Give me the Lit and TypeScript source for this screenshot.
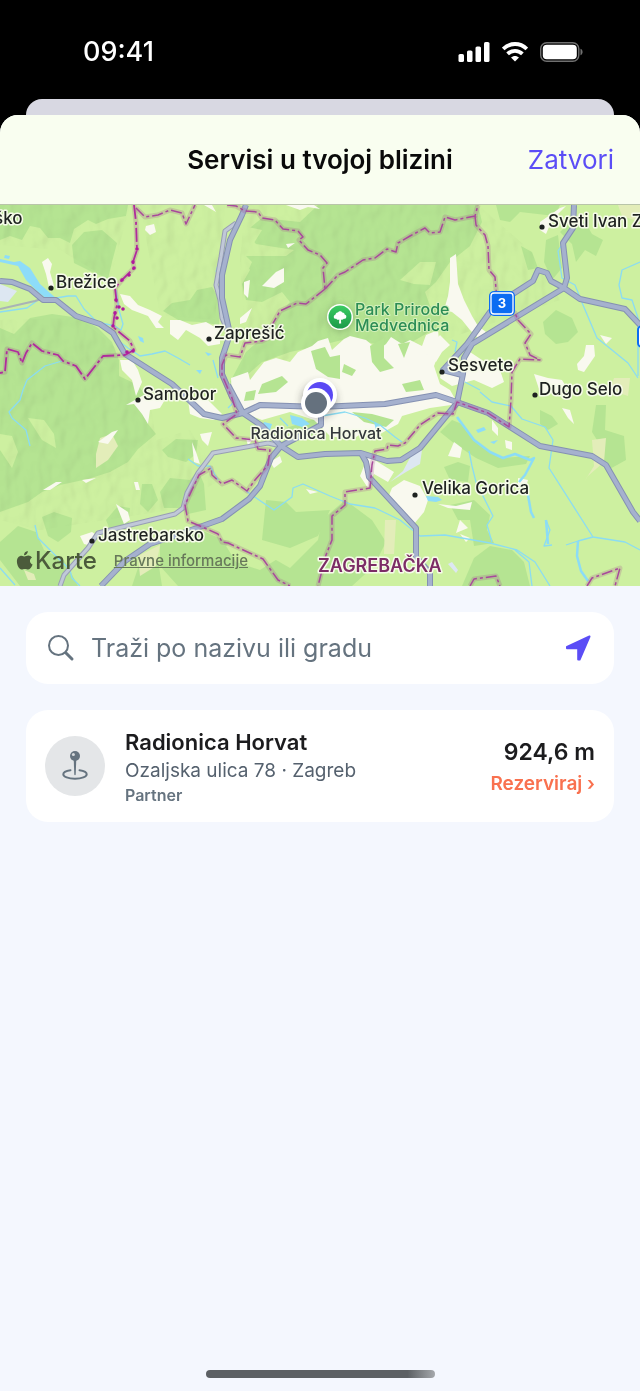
import { LitElement, html, svg, css } from 'lit';
import { customElement, property } from 'lit/decorators.js';

interface Place {
    name: string;
    x: number;
    y: number;
    dot?: [number, number];
}

// Map shapes share one coordinate space: 640 wide, y from 205 to 586.
const forests = [
    'M0 205H128L126 216L108 219L96 224L88 220L74 229L70 243L60 238L48 238L40 228L30 226L22 240L10 236L0 240Z',
    'M72 245L84 232L102 230L117 243L112 262L108 279L92 272L74 263Z',
    'M0 328L14 334L30 318L52 314L80 318L98 328L112 342L119 360L119 376L138 385L150 402L148 424L156 434L138 449L128 462L110 472L88 479L60 485L42 492L28 502L0 512Z',
    'M163 311L172 303L190 300L197 290L212 287L220 300L219 325L200 322L180 321Z',
    'M245 232L262 218L300 222L318 205H478L482 222L470 246L450 262L436 282L425 292L430 306L444 310L436 328L412 342L384 346L350 338L318 346L290 352L262 362L246 376L236 388L230 382L246 352L262 338L276 318L290 302L282 292L262 302L246 300L242 284L250 270L242 256L286 256L294 250L256 244Z',
    'M560 232L572 220L585 222L592 234L603 240L596 256L585 250L576 262L572 244Z',
    'M496 205H560L555 216L520 212L510 222L500 220Z',
    'M546 240L558 235L562 268L552 280L544 262Z',
    'M521 246L532 252L538 268L528 270Z',
    'M543 322L556 310L572 318L578 332L568 342L556 344L545 334Z',
    'M596 405L606 405L605 430L624 436L626 460L608 470L596 456L602 448L592 432Z',
    'M540 410L552 416L558 424L548 430L540 424Z',
    'M440 432L452 420L462 424L478 444L500 458L530 456L526 464L498 468L476 458L455 444Z',
    'M444 467L458 462L470 466L468 482L450 480Z',
    'M450 505L474 500L490 515L487 530L494 543L474 546L470 520L458 520Z',
    'M474 558L490 546L512 550L524 562L530 586H462Z',
    'M162 450L176 439L198 440L196 454L186 462L168 457Z',
    'M160 492L170 478L190 480L198 470L204 484L206 510L188 514L180 508L164 508Z',
    'M142 484L152 484L158 500L148 512L140 504Z',
    'M42 517L54 512L72 518L71 532L58 542L48 536Z',
    'M0 542L18 526L36 532L44 550L64 560L78 586H20L0 560Z',
    'M106 520L118 506L130 508L128 528L110 530Z',
    'M160 540L196 528L224 540L262 552L290 568L318 540L322 520L345 500L372 520L386 542L374 566L352 586H178L160 566Z',
    'M286 428L318 418L322 430L300 436Z',
    'M266 500L286 502L296 512L330 510L318 536L290 548L262 540Z',
    'M140 562L158 560L162 586H132Z'
];

const lightPatches = [
    'M140 250L200 236L214 250L206 282L184 290L160 278L142 282Z',
    'M28 418L44 420L54 434L56 448L42 440Z',
    'M0 434L12 436L18 452L12 468L0 450Z',
    'M400 280L420 262L436 262L430 285L414 284Z',
    'M208 238L240 225L262 230L246 256L252 262L244 280L230 290Z',
    'M226 546L240 538L262 548L282 556L260 570L236 562Z'
];

const beige = [
    'M100 438L112 434L118 446L108 460L96 468L96 454Z',
    'M385 520L396 520L394 554L384 554Z',
    'M592 440L606 438L604 462L588 476L584 482L594 466Z',
    'M138 556L160 545L156 566L140 576Z',
    'M618 205H640V222L622 216Z',
    'M614 378L630 378L628 396L610 390Z',
    'M420 378L434 382L430 394L422 392Z',
    'M24 570L34 574L36 580L28 580Z'
];

const towns = [
    'M232 402L231 378L248 372L250 380L264 362L276 358L290 362L298 352L312 346L318 341L328 338L332 350L344 339L350 336L366 340L378 350L386 344L391 337L402 344L410 340L422 346L426 335L438 330L440 350L434 366L440 384L450 390L458 404L430 408L402 416L398 424L380 434L366 430L352 440L330 436L314 420L290 412L262 420L246 414Z',
    'M470 352L482 360L500 370L504 382L492 388L474 380L452 386L440 378L442 366L456 366Z',
    'M170 320L180 320L192 325L206 322L220 330L220 344L208 346L200 338L186 330L178 340L170 334Z',
    'M120 294L130 296L138 305L150 310L162 316L158 322L164 328L156 328L148 316L132 310L124 304Z',
    'M120 360L132 360L138 370L142 382L136 396L132 380L122 370Z',
    'M126 405L142 396L166 398L160 408L150 410L148 424L142 414L134 404Z',
    'M188 400L204 396L216 408L222 414L214 420L200 418L190 414Z',
    'M42 262L48 258L52 264L50 272L54 286L50 292L46 274Z',
    'M146 226L154 224L156 232L150 235L145 230Z',
    'M450 258L456 254L458 284L464 300L472 316L478 326L486 332L478 338L470 330L462 320L452 312L444 310L448 296L450 282Z',
    'M204 205L216 212L212 205ZM286 205H314L320 209L308 207L300 210Z',
    'M276 272L284 268L284 282L274 288L262 286L270 278Z',
    'M244 282L250 280L248 298L244 294Z',
    'M240 318L252 308L246 322L240 324ZM286 244L295 243L288 248Z',
    'M424 352L440 335L450 345L442 352L436 362Z',
    'M540 222L560 208L566 206L552 220L546 234L540 230Z',
    'M586 345L594 345L595 356L584 372L578 370L577 364L584 356Z',
    'M534 374L548 378L562 380L568 390L556 394L540 392Z',
    'M392 488L404 480L420 486L428 500L424 512L414 524L398 508L388 498Z',
    'M438 504L456 506L472 502L470 510L448 508Z',
    'M505 440L512 442L512 450L506 448ZM460 520L468 528L456 533Z',
    'M518 478L528 480L524 494L518 486Z',
    'M116 504L128 512L130 520L124 524Z',
    'M80 536L92 532L98 536L92 546L84 544Z',
    'M134 482L138 482L140 490L136 490Z',
    'M43 490L56 482L62 482L50 490ZM82 480L96 478L86 483Z',
    'M98 442L112 432L118 430L108 444Z',
    'M200 434L212 432L208 446L202 440ZM192 442L196 452L200 464L194 462Z',
    'M270 462L280 456L282 462L274 468Z',
    'M246 438L252 440L248 446ZM306 489L318 492L310 494Z',
    'M368 456L394 472L388 482L374 474L368 488L360 476Z',
    'M492 420L498 428L498 436L492 430ZM562 408L570 410L574 424L568 418Z',
    'M454 442L462 448L460 458L448 456Z',
    'M600 335L612 338L606 344ZM460 534L470 538L466 542Z'
];

const lawns = [
    'M311 351L325 347L330 357L340 355L340 379L328 377L316 369Z',
    'M370 346L384 338L384 358L394 368L380 372L372 362Z',
    'M398 344L410 342L404 358Z',
    'M344 364L356 370L352 376L342 372Z',
    'M402 384L420 380L424 390L406 392Z',
    'M262 384L282 376L288 382L276 392L258 394Z',
    'M246 392L256 390L254 400L244 401Z',
    'M352 412L372 414L394 420L386 427L364 422Z',
    'M300 420L316 424L326 438L310 436L296 428Z'
];

const lakes = [
    'M0 259L14 262L20 261L30 268L40 284L50 293L56 298L48 300L38 292L26 280L18 266L0 262Z',
    'M5 255L10 256L9 259L4 258Z',
    'M290 415L302 418L310 424L302 427L292 424Z',
    'M264 422L272 424L270 430L262 427Z',
    'M374 422L380 426L376 430Z',
    'M476 430L484 427L486 430L478 433ZM490 442L498 440L494 444Z',
    'M426 496L438 497L442 500L436 502L428 501Z',
    'M138 336L143 338L144 343L140 341Z',
    'M205 352L212 354L208 356ZM196 370L202 370L200 374Z'
];

const airfields = ['M0 284L17 291L8 302L0 301Z', 'M390 482L403 471L412 454L422 450L420 464L406 472Z', 'M448 564L452 562L458 570L456 573Z'];

const streams = [
    'M56 298L68 296L76 296L84 309L97 322L115 326L121 330L123 324L119 310L116 290',
    'M0 312L27 308L38 300L52 297',
    'M112 336L128 348L140 356L152 354L165 351L178 358L190 365',
    'M23 390L20 400L9 412L12 418L26 430L30 446',
    'M23 390L27 380L45 366L62 361',
    'M35 525L38 538L56 556L70 570L72 578L80 586',
    'M0 568L15 585',
    'M246 491L262 502L274 510L292 497L293 488L303 484L330 496L350 504L375 508L400 520L420 536L445 535L490 543L517 550L535 562L550 586',
    'M188 459L198 466L210 466L218 480',
    'M322 416L345 412L365 418L380 425L395 437L402 442',
    'M280 418L288 426M234 402L228 408',
    'M515 550L529 562L532 586',
    'M469 451L472 466L476 482L493 516L487 525L492 542',
    'M480 392L492 402L511 406L522 419L545 427L553 440L549 468L593 537L625 542L640 550',
    'M593 537L578 541L566 545',
    'M552 545L544 546L550 530L546 520',
    'M563 243L558 251L562 278L575 285L583 305L597 338L612 350L628 363L638 378',
    'M640 262L622 270L619 285L622 298L632 300L638 318V376',
    'M452 340L457 342L455 352M465 382L480 390',
    'M216 272L220 258M213 360L218 378'
];

const rivers = [
    'M457 417L474 440L490 452L503 458L515 454L530 460L534 458L525 475L519 482',
    'M528 495L531 512L534 518',
    'M578 541L577 556L581 571L588 581',
    'M546 520L548 544'
];

const minorRoads = [
    'M236 223L225 231L221 257L216 285L220 300L222 318L228 332',
    'M281 446L268 443L213 453L198 473L187 493L183 508L175 514L98 533L88 548L64 575L60 586'
];

const tracks = ['M0 309L35 301L44 298'];

const motorways = [
    'M0 281L12 282L30 289L43 300L56 300L76 316L100 324L113 333L118 342L125 354L172 384L204 414L222 418L243 413L260 405L320 407L385 404L436 395L457 402L488 413L540 446L592 456L606 465L633 512L640 521',
    'M246 205L242 215L230 240L222 275L222 298L230 334L222 358V374L232 397L243 413L262 426L281 446L298 457L325 454L361 453L387 461L401 460L420 448L457 403',
    'M228 385L243 413',
    'M321 408V425L281 446L271 458L260 486L249 499L222 519L180 534L150 544L125 561L101 586',
    'M361 453L366 462L369 477L416 528V557L430 573V586',
    'M574 205L573 228L563 243L567 278L564 288L580 299L625 309L640 325',
    'M564 288L472 344L464 358L463 374L457 403',
    'M564 288L551 281L547 273L538 270L533 281L505 299L490 312L467 344L443 370L462 375'
];

const borders = [
    'M134 205L136 222L137 250L133 262L134 268L122 280L115 288L117 305L114 318L113 327L130 341L134 350L125 355L103 356L85 379L76 366L63 361L58 355L42 351L32 343L26 353L22 363L18 352L7 349L5 372L0 373'
];

// Small exclaves strung along the state border.
const borderSpots: [number, number][] = [
    [137, 249], [133, 262], [134, 268], [129, 275], [122, 280], [116, 300], [119, 307], [123, 309], [115, 313], [117, 318], [113, 326], [127, 352], [133, 351]
];

const countyBorders = [
    'M136 208L145 217L158 215L170 210L182 213L186 224L195 205',
    'M227 205L236 206L245 211L258 212L262 218L275 220L283 229L298 231L303 237L299 240L308 250L320 255L327 263L323 268L325 289',
    'M325 289L306 304L297 303L280 311L272 325L270 337L262 341L245 343L240 357L226 355L222 365V375L232 398L237 414L223 424L236 438L255 440L258 449L270 450L268 465L255 480L247 491L232 480L222 484L212 475L211 468L199 475L185 505L188 521L200 526L218 534L222 542L228 543L252 554L263 559L278 580L290 586',
    'M325 289L338 275L345 272L363 260L375 258L387 249L396 252L398 243L410 236L425 228L430 233L440 232L445 217L455 220L475 216L478 205',
    'M475 216L476 225L485 235L488 246L489 270L495 277L497 300L515 313L518 320L531 334L525 343L530 355L540 360L520 359L512 372L511 400L509 427L488 413L457 402L453 414L438 413L420 425L405 443L398 446L388 445L387 449L375 451L372 465L370 488L345 492L345 505L332 516V540L326 555L318 586',
    'M470 586L474 579L496 576L500 586',
    'M587 586L592 578L620 568L615 586'
];

const places: Place[] = [
    { name: 'ško', x: -6, y: 224 },
    { name: 'Brežice', x: 56, y: 288, dot: [51, 288] },
    { name: 'Zaprešić', x: 214, y: 339, dot: [209, 339] },
    { name: 'Samobor', x: 143, y: 400, dot: [138, 400] },
    { name: 'Sesvete', x: 448, y: 371, dot: [442, 372] },
    { name: 'Dugo Selo', x: 539, y: 395, dot: [535, 395] },
    { name: 'Sveti Ivan Z', x: 548, y: 227, dot: [542, 227] },
    { name: 'Velika Gorica', x: 422, y: 494, dot: [415, 495] },
    { name: 'Jastrebarsko', x: 98, y: 541, dot: [92, 541] }
];

@customElement('nearby-map')
export class NearbyMap extends LitElement {
    @property() workshop = '';

    static styles = css`
    :host {
      display: block;
      position: relative;
      font-family: Inter, "Liberation Sans", sans-serif;
    }
    .map { display: block; width: 100%; height: auto; background: #cdf0a0; }
    .forest { fill: #b5e492; }
    .light { fill: #cdf0a0; }
    .beige { fill: #e3edb9; }
    .town { fill: #f9f9ef; }
    .lake { fill: #8ddcf9; }
    .airfield { fill: #dde7f2; }
    .line { fill: none; stroke-linejoin: round; }
    .stream { stroke: #8bdcf2; stroke-width: 1.3; }
    .river { stroke: #8bdcf6; stroke-width: 2.5; }
    .track { stroke: #a9b3b6; stroke-width: 2; }
    .minor-case { stroke: #989eb4; stroke-width: 5; }
    .minor { stroke: #c0c8d8; stroke-width: 3; }
    .road-case { stroke: #8591b2; stroke-width: 6; }
    .road { stroke: #a5b1ce; stroke-width: 4; }
    .glow { stroke: #a3568e; stroke-opacity: 0.24; stroke-width: 5; }
    .border { stroke: #b02c9c; stroke-width: 1.8; stroke-dasharray: 14 3 3 3; }
    .county { stroke: #a8499b; stroke-width: 1.5; stroke-dasharray: 11 3 3 3; }
    .spot { fill: #b0189c; }
    .label {
      font-size: 17px;
      font-weight: 500;
      fill: #1e2220;
      stroke: #f6fbe9;
      stroke-width: 3;
      stroke-linejoin: round;
      paint-order: stroke;
    }
    .workshop { font-size: 16px; fill: #33373b; text-anchor: middle; }
    .park { font-size: 16px; font-weight: 500; fill: #2c8d55; stroke: #d4f0bb; stroke-width: 2; }
    .region { font-size: 18px; font-weight: 600; fill: #7c2c66; }
    .shield { font-size: 13px; font-weight: 700; fill: #fff; text-anchor: middle; }
    .legal {
      position: absolute;
      left: 16px;
      bottom: 11px;
      display: flex;
      align-items: center;
      gap: 17px;
      color: #4b5b3b;
    }
    .brand { display: flex; align-items: center; gap: 2px; font-size: 24px; line-height: 28px; font-weight: 500; }
    .legal a { color: #67785a; font-size: 15px; line-height: 20px; font-weight: 500; }
  `;

    lines(items: string[], name: string) {
        return items.map(d => svg`<path class="line ${name}" d=${d} />`);
    }

    areas(items: string[], name: string) {
        return items.map(d => svg`<path class=${name} d=${d} />`);
    }

    renderPlace(place: Place) {
        return svg`
      ${place.dot ? svg`<circle cx=${place.dot[0]} cy=${place.dot[1]} r="2.6" fill="#1e2220" />` : ''}
      <text class="label" x=${place.x} y=${place.y}>${place.name}</text>
    `;
    }

    render() {
        return html`
      <svg class="map" viewBox="0 205 640 381" role="img" aria-label="Karta">
        <defs>
          <filter id="relief" x="0" y="0" width="100%" height="100%">
            <feTurbulence type="fractalNoise" baseFrequency="0.07 0.045" numOctaves="2" seed="8" result="noise" />
            <feDiffuseLighting in="noise" surfaceScale="5" lighting-color="#fff" result="light">
              <feDistantLight azimuth="215" elevation="62" />
            </feDiffuseLighting>
            <feComposite in="light" in2="SourceGraphic" operator="in" />
          </filter>
          <filter id="soft" x="-50%" y="-50%" width="200%" height="200%">
            <feGaussianBlur stdDeviation="4" />
          </filter>
          <linearGradient id="park" x1="0" y1="0" x2="0" y2="1">
            <stop offset="0" stop-color="#3ccb62" />
            <stop offset="1" stop-color="#1a9a49" />
          </linearGradient>
        </defs>
        ${this.areas(forests, 'forest')}
        ${this.areas(lightPatches, 'light')}
        <g filter="url(#relief)" opacity="0.14" style="mix-blend-mode: multiply">
          <path d="M0 320L80 318L118 350L150 400L156 440L190 430L220 480L170 510L40 530L0 520Z" />
          <path d="M245 205H478L530 250L560 300L430 345L300 352L235 390L246 350L240 260Z" />
          <path d="M0 205H130L110 280L60 250L0 245ZM140 205H225L215 320L160 315Z" />
        </g>
        ${this.areas(beige, 'beige')}
        ${this.areas(towns, 'town')}
        ${this.areas(lawns, 'forest')}
        ${this.areas(airfields, 'airfield')}
        ${this.areas(lakes, 'lake')}
        ${this.lines(streams, 'stream')}
        ${this.lines(rivers, 'river')}
        ${this.lines(tracks, 'track')}
        ${this.lines(minorRoads, 'minor-case')}
        ${this.lines(minorRoads, 'minor')}
        ${this.lines(motorways, 'road-case')}
        ${this.lines(motorways, 'road')}
        ${this.lines(borders, 'glow')}
        ${this.lines(countyBorders, 'glow')}
        ${this.lines(borders, 'border')}
        ${this.lines(countyBorders, 'county')}
        ${borderSpots.map(([x, y]) => svg`<circle class="spot" cx=${x} cy=${y} r="1.8" />`)}

        <rect x="489" y="291" width="26" height="25" rx="5" fill="#0c6cf2" />
        <rect x="491" y="293" width="22" height="21" rx="3" fill="none" stroke="#fff" stroke-width="1.3" />
        <text class="shield" x="502" y="308">3</text>
        <rect x="638" y="326" width="24" height="21" rx="4" fill="#fff" stroke="#0c6cf2" stroke-width="2" />

        <circle cx="340" cy="318" r="13" fill="#4b6b3c" opacity="0.35" filter="url(#soft)" />
        <circle cx="340" cy="317" r="13" fill="#fff" />
        <circle cx="340" cy="317" r="11.5" fill="url(#park)" />
        <path d="M339 323.500L339.300 319.500C338 320.300 336.500 319.500 336.300 318.800C334.500 319 333.600 317.800 333.800 316.700C333.800 315.200 335 314.500 335.600 314.400C335.800 312.700 337.300 312.300 338 312.500C338.800 310.700 341.500 310.700 342.200 312.400C343.700 312.200 344.700 313.400 344.600 314.500C346.200 314.900 346.500 316 346.300 317C346.200 318.400 344.900 319 343.800 318.800C343.200 319.700 341.700 320 340.900 319.500L341.200 323.500Z" fill="#fff" />
        <text class="label park" x="355" y="315">Park Prirode</text>
        <text class="label park" x="355" y="331">Medvednica</text>

        ${places.map(place => this.renderPlace(place))}
        <text class="label region" x="318" y="572">ZAGREBAČKA</text>

        <circle cx="319" cy="400" r="17" fill="#333" opacity="0.45" filter="url(#soft)" />
        <circle cx="320" cy="395" r="17" fill="#fff" />
        <circle cx="320" cy="395" r="13" fill="#5a48f4" />
        <circle cx="316" cy="403" r="15" fill="#fff" />
        <circle cx="316" cy="403" r="11" fill="#65717e" />
        <text class="label workshop" x="316" y="439">${this.workshop}</text>
      </svg>
      <div class="legal">
        <span class="brand">
          <svg width="17" height="21" viewBox="0 0 17 21" fill="currentColor" aria-hidden="true">
            <path d="M11.800 0C11.900 2.400 10 4.400 8 4.300C7.800 2 9.700 0.200 11.800 0Z" />
            <path d="M8.500 5.600C9.400 5.600 10.500 4.600 12.300 4.600C13.800 4.600 15.200 5.400 16 6.600C13 8.300 13.400 12.300 16.600 13.600C15.800 15.900 14.200 18.600 12.300 18.600C11 18.600 10.500 17.900 8.900 17.900C7.300 17.900 6.700 18.600 5.600 18.600C3.400 18.600 0.900 14.400 0.900 10.600C0.900 6.800 3.200 4.700 5.500 4.700C7 4.700 8 5.600 8.500 5.600Z" />
          </svg>
          Karte
        </span>
        <a href="#pravne-informacije">Pravne informacije</a>
      </div>
    `;
    }
}

@customElement('workshop-card')
export class WorkshopCard extends LitElement {
    @property() name = '';
    @property() address = '';
    @property() kind = '';
    @property() distance = '';

    static styles = css`
    :host {
      display: flex;
      align-items: center;
      gap: 20px;
      padding: 18px 19px;
      border-radius: 22px;
      background: white;
    }
    .icon {
      flex: none;
      display: grid;
      place-items: center;
      width: 60px;
      height: 60px;
      border-radius: 50%;
      background: #e4e6e8;
      color: #65737f;
    }
    .info { flex: 1; min-width: 0; }
    .name { margin: 0; font-size: 22px; line-height: 28px; font-weight: 600; color: #1c1c1e; }
    .address { margin: 0; font-size: 19px; line-height: 30px; color: #55616e; }
    .kind { margin: 0; font-size: 16px; line-height: 18px; font-weight: 600; color: #65737f; }
    .side { display: flex; flex-direction: column; align-items: flex-end; padding-top: 3px; }
    .distance { font-size: 23px; line-height: 32px; font-weight: 600; color: #1c1c1e; }
    a { font-size: 19px; line-height: 32px; font-weight: 600; color: #f9714f; text-decoration: none; }
  `;

    render() {
        return html`
      <div class="icon">
        <svg width="28" height="32" viewBox="0 0 28 32" fill="none" stroke="currentColor" aria-hidden="true">
          <path d="M9.500 20.200C5 20.800 2.300 22.300 2.300 24.200C2.300 26.700 7.300 28.700 14 28.700S25.700 26.700 25.700 24.200C25.700 22.300 23 20.800 18.500 20.200" stroke-width="2" stroke-linecap="round" />
          <path d="M12.700 9H15.300L14.700 24.500C14.500 25.600 13.500 25.600 13.300 24.500Z" fill="currentColor" stroke="none" />
          <circle cx="14" cy="6" r="5" fill="currentColor" stroke="none" />
          <circle cx="12.400" cy="4.400" r="1.500" fill="#d5d9dc" stroke="none" />
        </svg>
      </div>
      <div class="info">
        <h2 class="name">${this.name}</h2>
        <p class="address">${this.address}</p>
        <p class="kind">${this.kind}</p>
      </div>
      <div class="side">
        <span class="distance">${this.distance}</span>
        <a href="#rezerviraj">Rezerviraj ›</a>
      </div>
    `;
    }
}

@customElement('app-root')
export class AppRoot extends LitElement {
    static styles = css`
    :host {
      display: flex;
      flex-direction: column;
      min-height: 100vh;
      background: #000;
      font-family: Inter, "Liberation Sans", sans-serif;
    }
    .status {
      display: flex;
      justify-content: space-between;
      align-items: center;
      box-sizing: border-box;
      height: 99px;
      padding: 4px 57px 0 83px;
      color: white;
      font-size: 27px;
      font-weight: 500;
    }
    .signals { display: flex; align-items: center; gap: 12px; }
    .behind { height: 16px; margin: 0 26px; border-radius: 16px 16px 0 0; background: #d8d8e2; }
    .sheet {
      flex: 1;
      display: flex;
      flex-direction: column;
      border-radius: 18px 18px 0 0;
      background: #f4f7fe;
      overflow: hidden;
    }
    header {
      display: grid;
      grid-template-columns: 1fr auto 1fr;
      align-items: center;
      height: 89px;
      padding: 0 26px;
      border-bottom: 1px solid #b9c5a9;
      background: #f9fef0;
    }
    h1 { grid-column: 2; margin: 0; font-size: 26px; line-height: 32px; font-weight: 600; color: #0a0a0a; }
    button { padding: 0; border: 0; background: none; color: #5b4df6; font: inherit; cursor: pointer; }
    .close { justify-self: end; font-size: 26px; line-height: 32px; }
    .content { display: flex; flex-direction: column; gap: 26px; padding: 26px; }
    .search {
      display: flex;
      align-items: center;
      gap: 16px;
      height: 72px;
      padding: 0 22px;
      border-radius: 22px;
      background: white;
      color: #65737f;
    }
    .search svg { display: block; flex: none; }
    input {
      flex: 1;
      min-width: 0;
      padding: 0;
      border: 0;
      outline: none;
      background: none;
      color: #1c1c1e;
      font: inherit;
      font-size: 25px;
      line-height: 32px;
    }
    input::placeholder { color: #65737f; opacity: 1; }
    .home {
      width: 229px;
      height: 8px;
      margin: auto auto 13px;
      border-radius: 4px;
      background: linear-gradient(90deg, #5c6064 88%, #a5a8ac);
    }
  `;

    render() {
        return html`
      <div class="status">
        <span>09:41</span>
        <div class="signals">
          <svg width="32" height="20" viewBox="0 0 32 20" fill="#fff" aria-hidden="true">
            <rect x="0.500" y="12" width="5.500" height="8" rx="1.600" />
            <rect x="9" y="8.500" width="5.500" height="11.500" rx="1.600" />
            <rect x="17.500" y="4.500" width="5.500" height="15.500" rx="1.600" />
            <rect x="26" y="0" width="5.500" height="20" rx="1.600" />
          </svg>
          <svg width="26" height="20" viewBox="0 0 26 20" fill="none" stroke="#fff" stroke-width="3.800" aria-hidden="true">
            <path d="M1.200 7C8 0.300 18 0.300 24.800 7" />
            <path d="M5.600 11.900C9.800 7.800 16.200 7.800 20.400 11.900" />
            <path d="M13 19.500L9 15.500C11.300 13.400 14.700 13.400 17 15.500Z" fill="#fff" stroke="none" />
          </svg>
          <svg width="43" height="20" viewBox="0 0 43 20" aria-hidden="true">
            <rect x="0.700" y="0.700" width="38.100" height="18.600" rx="6" fill="none" stroke="#707070" stroke-width="1.400" />
            <rect x="2.800" y="2.800" width="34" height="14.400" rx="4" fill="#fff" />
            <path d="M40.500 6.800C43.300 8 43.300 12 40.500 13.200Z" fill="#707070" />
          </svg>
        </div>
      </div>
      <div class="behind"></div>
      <main class="sheet">
        <header>
          <h1>Servisi u tvojoj blizini</h1>
          <button class="close">Zatvori</button>
        </header>
        <nearby-map workshop="Radionica Horvat"></nearby-map>
        <div class="content">
          <div class="search">
            <svg width="27" height="28" viewBox="0 0 27 28" fill="none" stroke="currentColor" stroke-linecap="round" aria-hidden="true">
              <circle cx="10.500" cy="11.500" r="9.500" stroke-width="2" />
              <path d="M18 19L24 25" stroke-width="3" />
            </svg>
            <input type="search" placeholder="Traži po nazivu ili gradu" aria-label="Traži po nazivu ili gradu" />
            <button aria-label="Moja lokacija">
              <svg width="28" height="28" viewBox="0 0 28 28" fill="currentColor" stroke="currentColor" stroke-width="2" stroke-linejoin="round" aria-hidden="true">
                <path d="M25.500 2.500L3 12.800V14.200H14.200V25.500H15.600Z" />
              </svg>
            </button>
          </div>
          <workshop-card
            name="Radionica Horvat"
            address="Ozaljska ulica 78 · Zagreb"
            kind="Partner"
            distance="924,6 m"
          ></workshop-card>
        </div>
        <div class="home"></div>
      </main>
    `;
    }
}
